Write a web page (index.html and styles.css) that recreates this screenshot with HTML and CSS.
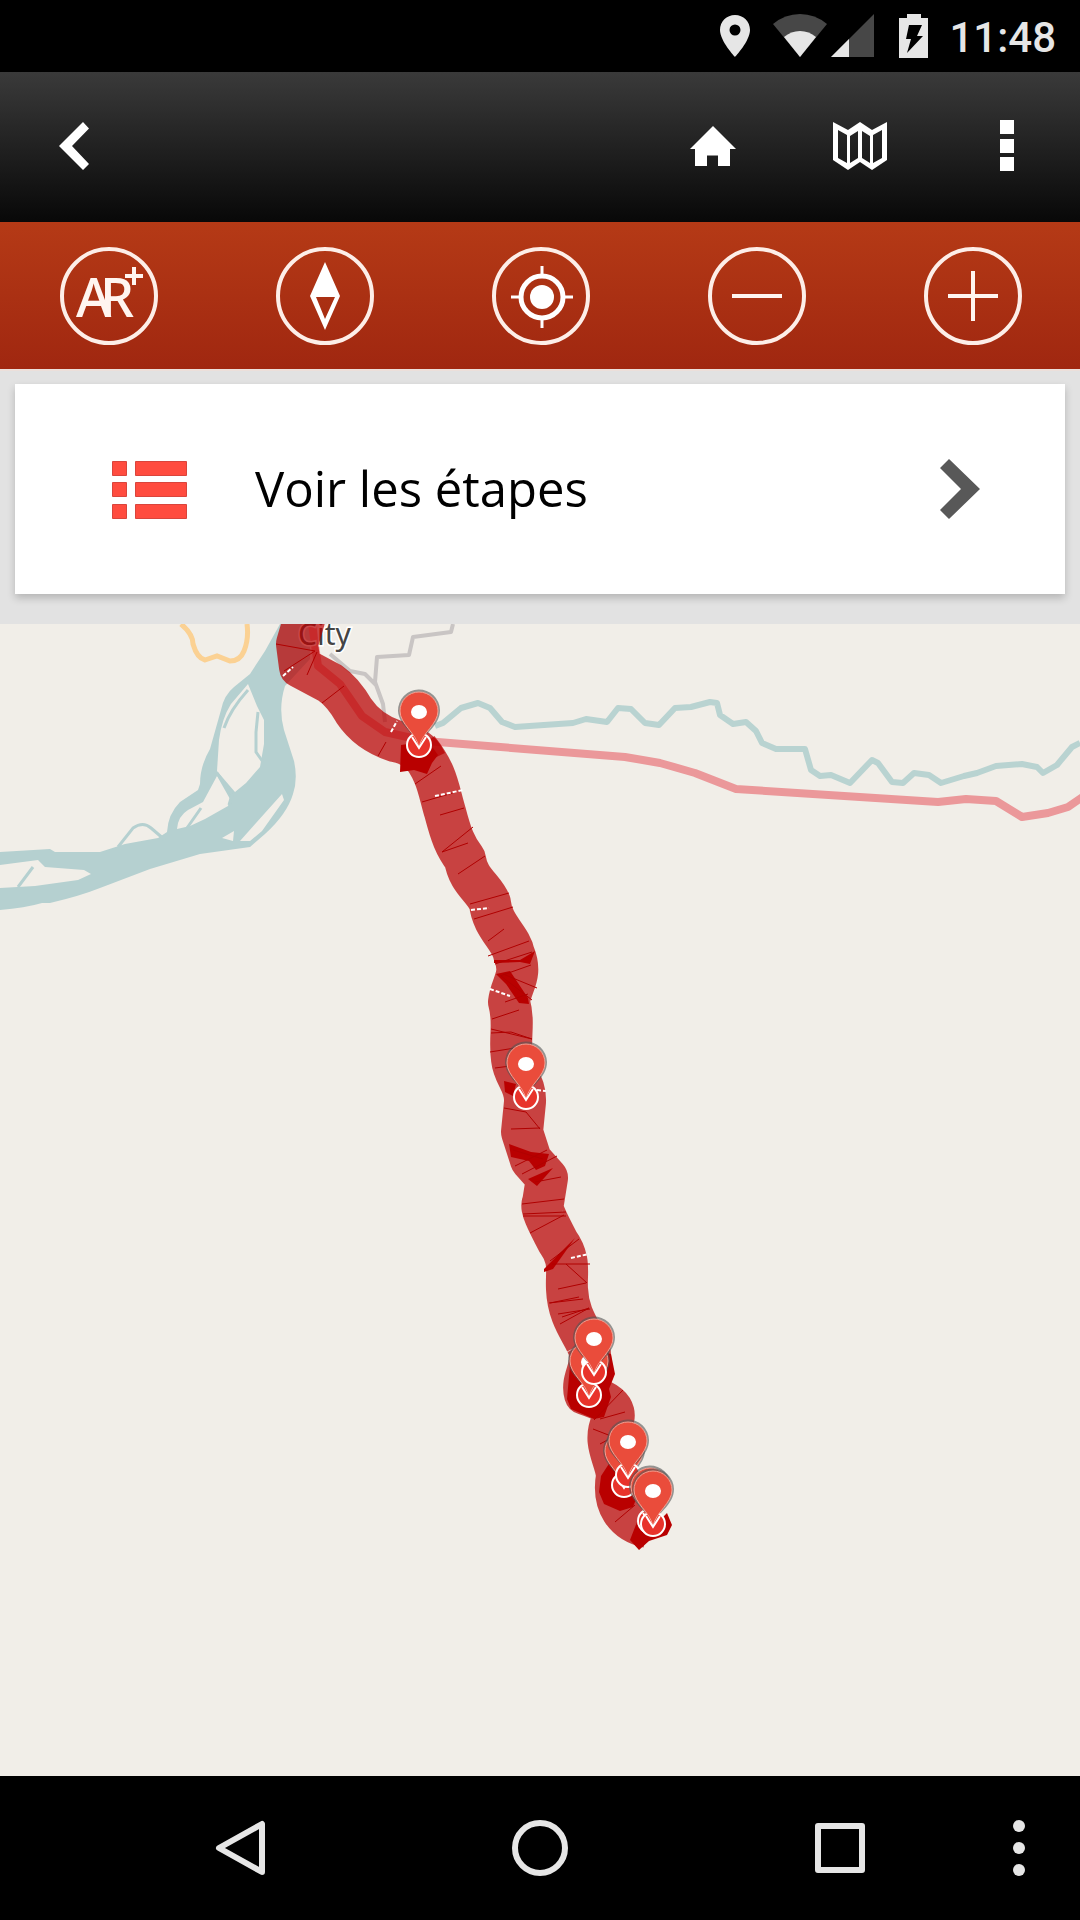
FILE: index.html
```html
<!DOCTYPE html>
<html lang="fr">
<head>
    <meta charset="UTF-8">
    <meta name="viewport" content="width=device-width, initial-scale=1.0">
    <title>Parcours</title>
    <link rel="stylesheet" href="styles.css">
</head>
<body>
    <div class="status-bar">
        <svg class="status-location" width="32" height="44" viewBox="0 0 32 44" aria-hidden="true">
            <path fill="#e6e6e6" fill-rule="evenodd" d="M16 1C7.600 1 1 7.600 1 16c0 11 15 27 15 27s15-16 15-27C31 7.600 24.400 1 16 1zm0 9.500a5.500 5.500 0 1 1 0 11 5.500 5.500 0 0 1 0-11z"/>
        </svg>
        <svg class="status-wifi" width="54" height="44" viewBox="0 0 54 44" aria-hidden="true">
            <path fill="#474747" d="M0 10Q12 0 27 0t27 10L27 43z"/>
            <path fill="#e6e6e6" d="M11 23q7-6 16-6t16 6L27 43z"/>
        </svg>
        <svg class="status-signal" width="44" height="44" viewBox="0 0 44 44" aria-hidden="true">
            <path fill="#474747" d="M43 0v43H0z"/>
            <path fill="#e6e6e6" d="M18 25v18H0z"/>
        </svg>
        <svg class="status-battery" width="30" height="44" viewBox="0 0 30 44" aria-hidden="true">
            <path fill="#e6e6e6" d="M8 0h14v4h7v40H0V4h8z"/>
            <path fill="#000" d="M10 11h13l-5 11h6L8 39l4-14H7z"/>
        </svg>
        <span class="clock">11:48</span>
    </div>

    <header class="header">
        <button class="header-btn" type="button" aria-label="Retour">
            <svg width="30" height="48" viewBox="0 0 30 48">
                <path fill="#fff" d="M24 0l6 6.500L13 24l17 18-6 6L0 24z"/>
            </svg>
        </button>
        <div class="header-actions">
            <button class="header-btn" type="button" aria-label="Accueil">
                <svg width="46" height="40" viewBox="0 0 46 40">
                    <path fill="#fff" d="M23 0l23 23h-6v17H28V29.500H17V40H5V23H0z"/>
                </svg>
            </button>
            <button class="header-btn" type="button" aria-label="Carte">
                <svg width="54" height="50" viewBox="0 0 54 50">
                    <path fill="#fff" fill-rule="evenodd" d="M0 1l15 8L27 1l12 8 15-8v38L39 49l-12-8-12 8L0 39zM5 9v28l9 5V14zm12 6v27l8-5V10zm12-5v27l8 5V15zm11 4v28l9-5V9z"/>
                </svg>
            </button>
            <button class="header-btn" type="button" aria-label="Menu">
                <svg width="14" height="52" viewBox="0 0 14 52">
                    <path fill="#fff" d="M0 0h14v14H0zM0 19h14v14H0zM0 37h14v14H0z"/>
                </svg>
            </button>
        </div>
    </header>

    <div class="toolbar">
        <button class="tool" type="button" aria-label="Réalité augmentée">
            <svg width="100" height="100" viewBox="0 0 100 100">
                <circle class="ring" cx="51" cy="50" r="47"/>
                <text class="ar" x="18" y="71">A<tspan x="42">R</tspan></text>
                <path class="plus" d="M67 30h18M76 21v18"/>
            </svg>
        </button>
        <button class="tool" type="button" aria-label="Boussole">
            <svg width="100" height="100" viewBox="0 0 100 100">
                <circle class="ring" cx="51" cy="50" r="47"/>
                <path fill="#fff" fill-rule="evenodd" d="M51 16l15 34-15 34-15-34zm-9 35l9 22 10-22z"/>
            </svg>
        </button>
        <button class="tool" type="button" aria-label="Ma position">
            <svg width="100" height="100" viewBox="0 0 100 100">
                <circle class="ring" cx="51" cy="50" r="47"/>
                <circle cx="52" cy="51" r="21" fill="none" stroke="#fff" stroke-width="5"/>
                <circle cx="52" cy="51" r="12" fill="#fff"/>
                <path stroke="#fff" stroke-width="3" d="M52 20v10M52 73v9M21 51h10M74 51h9"/>
            </svg>
        </button>
        <button class="tool" type="button" aria-label="Zoom arrière">
            <svg width="100" height="100" viewBox="0 0 100 100">
                <circle class="ring" cx="51" cy="50" r="47"/>
                <path class="sign" d="M26 50h50"/>
            </svg>
        </button>
        <button class="tool" type="button" aria-label="Zoom avant">
            <svg width="100" height="100" viewBox="0 0 100 100">
                <circle class="ring" cx="51" cy="50" r="47"/>
                <path class="sign" d="M26 50h50M51 25v50"/>
            </svg>
        </button>
    </div>

    <div class="steps">
        <a class="steps-card" href="#etapes">
            <svg class="list-icon" width="76" height="60" viewBox="0 0 76 60" aria-hidden="true">
                <path fill="#ff4c3f" stroke="#d9453c" d="M1.500 2.500h14v14h-14zM24.500 2.500h51v14h-51zM1.500 23.500h14v14h-14zM24.500 23.500h51v14h-51zM1.500 45.500h14v14h-14zM24.500 45.500h51v14h-51z"/>
            </svg>
            <span class="steps-label">Voir les étapes</span>
            <svg width="40" height="60" viewBox="0 0 40 60" aria-hidden="true">
                <path fill="#585858" d="M9 0L0 9l21 21L0 51l9 9 31-30z"/>
            </svg>
        </a>
    </div>

    <svg class="map" viewBox="0 0 1080 1152" preserveAspectRatio="xMidYMin slice" role="img" aria-label="Carte du parcours">
        <defs>
            <g id="pin">
                <path fill="#555" opacity=".6" d="M0 35C-4 22-20 15-21 0a21 21 0 0 1 42-1C21 15 4 23 0 35z"/>
                <circle cy="34" r="12" fill="#e8332b" stroke="#fff" stroke-width="2"/>
                <path fill="#ea4c3b" stroke="#f4a092" d="M0 36C-3 22-19 13-19 0a19 19 0 0 1 38 0C19 13 3 22 0 36z"/>
                <path fill="none" stroke="#fff" stroke-width="2" d="M-7 26L0 37l7-11"/>
                <ellipse cy="1" rx="8" ry="7" fill="#fff"/>
            </g>
        </defs>

        <!-- fleuve -->
        <path class="water" fill-rule="evenodd" d="M280 0L265 27 250 50 234 63Q224 71 221 86L210 125Q200 142 200 160L198 166 180 178Q168 190 167 208L158 214 125 220 100 228H55L50 225 0 228V286Q25 284 42 279L50 279Q80 272 100 264L150 245 200 230 250 223 265 210Q287 190 293 170 298 155 294 137L284 106Q278 84 285 62L310 35 310 0z
            M248 60L257 82 264 96 264 120 260 143 246 159 235 168 217 147 219 116Q222 94 231 80z
            M217 152L230 175 228 182 205 195 190 202 177 205Q178 192 188 186L203 178z
            M240 217L282 170 284 176 262 207 250 217z
            M222 214L234 207 233 217z
            M0 241L38 236 45 243 84 246 91 250 78 256 35 262 0 264z"/>
        <path class="water-line" d="M258 88l-2 20v20l7 10M248 66q-18 20-24 38M217 149l15 22-3 10M187 204l14-20M33 243L18 263M118 223l15-19q10-7 18 0l14 12"/>

        <path class="stream" d="M435 102L443 99 461 84 478 79 490 84 502 98 515 103 573 99 586 95 607 98 618 84 631 85 645 99 659 101 675 84 691 83 710 78 717 79 720 91 733 100 746 98 756 107 762 119 776 125H805L811 146 820 152 831 151 850 159 872 136 878 139 892 158 903 159 914 149 929 151 941 159 964 152 977 149 996 142 1022 140 1037 143 1043 149 1057 141 1072 123 1080 119"/>
        <path class="main-road" d="M312 0L318 42 340 60 362 92 385 108 425 117 625 133 660 139 695 149 736 165 938 178 966 175 996 177 1022 193 1048 189 1068 183 1084 172"/>
        <path class="orange-road" d="M181 0Q193 10 193 20 197 34 205 36L217 32 230 37Q240 37 244 27 249 15 247 0"/>
        <path class="minor-road" d="M453 0L451 8 413 13 409 31 377 33 375 58 383 80 385 98M330 30L350 47 365 50 376 61"/>
        <text class="city" x="298" y="21">City</text>

        <!-- trace du parcours -->
        <path class="route" d="M308-20L304-4 297 20 300 43 330 59Q343 68 354 87 368 108 395 117 418 121 426 138"/>
        <path class="route" d="M418 125C438 150 438 165 445 188C451 211 455 222 465 235C468 257 484 264 490 279C492 302 511 314 514 330C523 352 511 360 509 378C515 400 509 412 512 435C514 453 526 459 525 478L522 508 531 536 547 554 543 579C540 583 547 597 558 618C571 636 566 648 567 665C568 690 579 704 586 718"/>
        <path class="route" d="M586 718C598 740 580 753 585 770C604 776 619 784 612 798C602 819 616 835 617 852C612 880 625 898 648 903"/>
        <path class="route-dark" d="M401 121l14-2 18 5 5 7-6 8-5 11-13-4-14 2zM571 730l17-5 23 5 4 20-6 15 2 8-7 20-10 2-23-10-4-10zM601 852l13-20 16 8 10 25-7 18-13 4-16-7-5-12zM637 898l18 3 12-12 5 12-5 10-18 6-10 9-9-10z"/>
        <path class="route-dark" d="M494 336l26 0 15-9-5 13-10-2-26 1zM496 350l14-3 18 27 1 6-10-1-13-19zM509 520l22 8 18 2-4 12-9 4-7-9-18-4zM528 555l25-11-16 18zM544 645l31-31-22 31-9 3zM504 457l12 3-3 12-8-4z"/>

        <!-- raccords entre les segments -->
        <path class="route-crack" d="M276 20l39 7-31 20M317 28l-10 23M322 79l22-17M378 132l8-14M415 160l26-18M422 178l34-10M440 191l24-7M442 228l31-25M442 228l26-9M458 250l27-18M470 280l39-11M474 295l39-12M488 317l16-12M488 332l41-15M495 340l37-12M500 352l31-11M503 350l34 14M501 352l31 24M505 378l23-8M492 395l27-9M491 405l41 10M491 409l20-1 21 7M490 428l31-5M495 444l31-4M504 484l22 4 14 17M511 505l29-1M513 526l30 9M515 542l32-16M522 550l35-18M535 558l26-5M522 580l42-5M523 590l43-2M523 592h43M530 609l34-18M550 637l29-22M552 640h38M566 640l21 19M558 665l28-6M550 679l29-6M562 693l27-9M560 700l29-16"/>
        <path class="route-crack" d="M549 679l34-4M558 690l32-5M575 770l25 10M594 796l29-30M600 795l25-7M593 805l18 7M600 820l15-8M615 898l20-17"/>
        <path class="route-gap" d="M283 52l10-9M391 108l6-11M435 172l28-6M471 286l18-2M490 365l20 7M537 466l9 1M571 634l18-4"/>

        <use href="#pin" x="419" y="87"/>
        <use href="#pin" x="526" y="439"/>
        <use href="#pin" x="589" y="737"/>
        <use href="#pin" x="594" y="714"/>
        <use href="#pin" x="624" y="827"/>
        <use href="#pin" x="628" y="817"/>
        <use href="#pin" x="650" y="863"/>
        <use href="#pin" x="653" y="866"/>
    </svg>

    <nav class="nav-bar">
        <button class="nav-btn" type="button" aria-label="Précédent">
            <svg width="56" height="56" viewBox="0 0 56 56">
                <path class="nav-icon" d="M50 4v48L7 28z"/>
            </svg>
        </button>
        <button class="nav-btn" type="button" aria-label="Écran d'accueil">
            <svg width="56" height="56" viewBox="0 0 56 56">
                <circle class="nav-icon" cx="28" cy="28" r="25"/>
            </svg>
        </button>
        <button class="nav-btn" type="button" aria-label="Applications récentes">
            <svg width="56" height="56" viewBox="0 0 56 56">
                <rect class="nav-icon" x="6" y="6" width="44" height="44"/>
            </svg>
        </button>
        <button class="nav-more" type="button" aria-label="Plus d'options">
            <svg width="12" height="56" viewBox="0 0 12 56" fill="#e6e6e6">
                <circle cx="6" cy="6" r="6"/>
                <circle cx="6" cy="28" r="6"/>
                <circle cx="6" cy="50" r="6"/>
            </svg>
        </button>
    </nav>
</body>
</html>
```
FILE: styles.css
```css
* {
    box-sizing: border-box;
}
body {
    margin: 0;
    min-height: 100vh;
    display: flex;
    flex-direction: column;
    font-family: "Open Sans", "Noto Sans", sans-serif;
    background-color: #f1eee8;
}
button {
    padding: 0;
    border: none;
    background: none;
    cursor: pointer;
}
svg {
    display: block;
    flex-shrink: 0;
}
.status-bar {
    display: flex;
    align-items: center;
    justify-content: flex-end;
    height: 72px;
    padding-right: 24px;
    background-color: #000;
}
.status-location {
    margin-right: 22px;
}
.status-wifi {
    margin-right: 4px;
}
.status-signal {
    margin-right: 24px;
}
.status-battery {
    margin-right: 20px;
}
.clock {
    padding-top: 4px;
    font-family: Roboto, sans-serif;
    font-size: 42px;
    font-weight: 500;
    line-height: 64px;
    color: #e6e6e6;
}
.header {
    display: flex;
    justify-content: space-between;
    height: 150px;
    padding-bottom: 2px;
    background: linear-gradient(#3a3a3a, #080808);
}
.header-actions {
    display: flex;
}
.header-btn {
    display: flex;
    align-items: center;
    justify-content: center;
    width: 147px;
}
.toolbar {
    display: flex;
    height: 147px;
    background: linear-gradient(#b53a16, #a02710);
}
.tool {
    flex: 1;
    display: flex;
    align-items: center;
    justify-content: center;
}
.ring {
    fill: none;
    stroke: #fdeee8;
    stroke-width: 4;
}
.ar {
    font-family: "Noto Sans", sans-serif;
    font-size: 54px;
    font-weight: 500;
    fill: #fff5f0;
}
.plus {
    stroke: #fff5f0;
    stroke-width: 4;
}
.sign {
    stroke: #fff5f0;
    stroke-width: 4;
}
.steps {
    padding: 13px 15px 30px;
    border-top: 2px solid #ecdfda;
    background-color: #e2e2e2;
}
.steps-card {
    display: flex;
    align-items: center;
    height: 210px;
    padding: 0 85px 0 96px;
    background-color: #fff;
    box-shadow: 0 4px 8px rgba(0, 0, 0, 0.2);
    color: #000;
    text-decoration: none;
}
.list-icon {
    margin-right: 68px;
}
.steps-label {
    flex: 1;
    padding-bottom: 2px;
    font-size: 49px;
    line-height: 64px;
}
.map {
    flex: 1;
    width: 100%;
    min-height: 0;
}
.water {
    fill: #b5d0d0;
}
.water-line {
    fill: none;
    stroke: #b5d0d0;
    stroke-width: 3;
}
.stream {
    fill: none;
    stroke: #b9d3d1;
    stroke-width: 6;
    stroke-linejoin: round;
}
.main-road {
    fill: none;
    stroke: #eb989a;
    stroke-width: 8;
    stroke-linejoin: round;
}
.orange-road {
    fill: none;
    stroke: #fbd193;
    stroke-width: 5;
}
.minor-road {
    fill: none;
    stroke: #c9c5c4;
    stroke-width: 4;
    stroke-linejoin: round;
}
.city {
    font-family: "Noto Sans", sans-serif;
    font-size: 30px;
    fill: #444;
    stroke: #fff;
    stroke-width: 3;
    paint-order: stroke;
}
.route {
    fill: none;
    stroke: #b90000;
    stroke-width: 42;
    stroke-linejoin: round;
    opacity: 0.72;
}
.route-dark {
    fill: #b90000;
}
.route-crack {
    fill: none;
    stroke: #b00000;
    stroke-width: 1;
}
.route-gap {
    fill: none;
    stroke: #fff;
    stroke-width: 2;
    stroke-dasharray: 4 2;
}
.nav-bar {
    display: flex;
    height: 144px;
    padding: 0 32px 0 90px;
    background-color: #000;
}
.nav-btn {
    flex: 1;
    display: flex;
    align-items: center;
    justify-content: center;
}
.nav-icon {
    fill: none;
    stroke: #e6e6e6;
    stroke-width: 6;
    stroke-linejoin: round;
}
.nav-more {
    display: flex;
    align-items: center;
    justify-content: center;
    width: 58px;
}
```
